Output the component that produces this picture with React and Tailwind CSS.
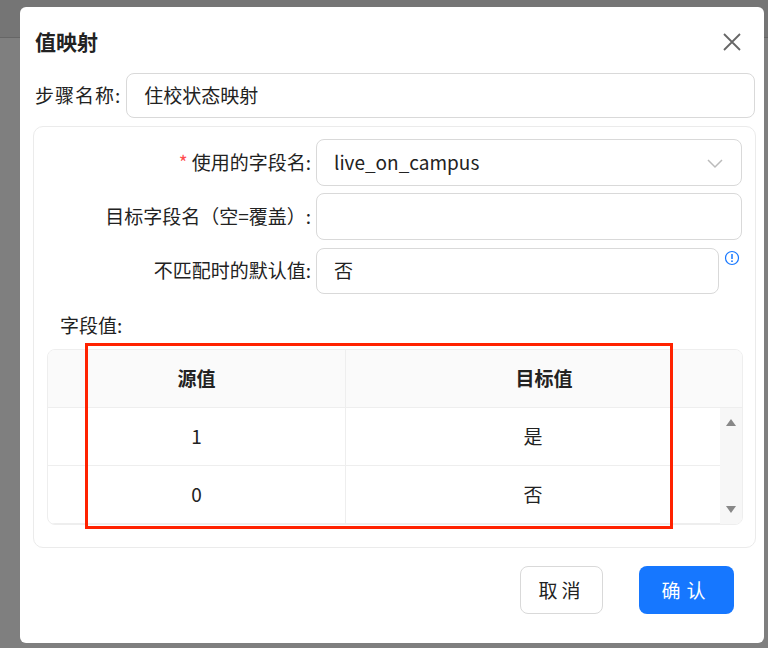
import React from 'react';

const F = { fontFamily: '"Noto Sans CJK SC", "Noto Sans", sans-serif' };

function Field({ label, required, children, extra }) {
  return (
    <div className="flex items-center h-[47px]">
      <div className="w-[282px] text-right pr-[5px] text-[19px] text-[#222] whitespace-nowrap">
        {required && <span className="text-[#ff4d4f] mr-1">*</span>}
        {label}
      </div>
      {children}
      {extra}
    </div>
  );
}

export default function App() {
  return (
    <div className="relative w-[768px] h-[648px] bg-[#7f7f7f] overflow-hidden" style={F}>
      <div className="h-[38px] bg-[#757575] border-b border-[#666]" />
      <div className="absolute left-[20px] top-[7px] w-[744px] h-[636px] bg-white rounded-[6px] flex flex-col">
        <div className="flex items-center justify-between pl-[15px] pr-[22px] h-[70px]">
          <span className="text-[21px] font-bold text-[#222]">值映射</span>
          <svg width="20" height="20" viewBox="0 0 20 20" stroke="#666" strokeWidth="1.8"><path d="M2 2L18 18M18 2L2 18" /></svg>
        </div>
        <div className="flex items-center pl-[15px] pr-[9px] -mt-[4px]">
          <span className="text-[19px] text-[#222] mr-[5px] tracking-[1px]">步骤名称:</span>
          <div className="flex-1 h-[45px] border border-[#d9d9d9] rounded-[8px] flex items-center px-[17px] text-[19px] text-[#222]">住校状态映射</div>
        </div>
        <div className="relative ml-[13px] mr-[8px] mt-[8px] h-[422px] border border-[#ebebeb] rounded-[10px] pt-[12px] pr-[13px]">
          <div className="flex flex-col gap-[7px]">
            <Field label="使用的字段名:" required>
              <div className="flex-1 h-[47px] border border-[#d9d9d9] rounded-[8px] flex items-center justify-between px-[17px] text-[19px] text-[#222]">
                live_on_campus
                <svg width="18" height="18" viewBox="0 0 18 18" fill="none" stroke="#bbb" strokeWidth="1.5"><path d="M2 6l7 7 7-7" /></svg>
              </div>
            </Field>
            <Field label="目标字段名（空=覆盖）:">
              <div className="flex-1 h-[47px] border border-[#d9d9d9] rounded-[8px]" />
            </Field>
            <Field label="不匹配时的默认值:" extra={
              <div className="w-[18px] self-start mt-[3px] ml-[5px]">
                <svg width="16" height="16" viewBox="0 0 16 16"><circle cx="8" cy="8" r="6.5" fill="none" stroke="#1677ff" strokeWidth="1.2" /><path d="M8 4v5" stroke="#1677ff" strokeWidth="1.5" /><circle cx="8" cy="11.2" r="0.9" fill="#1677ff" /></svg>
              </div>
            }>
              <div className="flex-1 h-[46px] border border-[#d9d9d9] rounded-[8px] flex items-center px-[17px] text-[19px] text-[#222]">否</div>
            </Field>
          </div>
          <div className="pl-[26px] mt-[17px] text-[19px] text-[#222]">字段值:</div>
          <div className="ml-[13px] mt-[9px] w-[696px] border border-[#eee] rounded-[8px] overflow-hidden">
            <div className="flex h-[58px] bg-[#fafafa] border-b border-[#eee] text-[19px] font-bold text-[#222]">
              <div className="w-[298px] flex items-center justify-center border-r border-[#eee]">源值</div>
              <div className="flex-1 flex items-center justify-center">目标值</div>
            </div>
            <div className="flex">
              <div className="flex-1">
                {[['1', '是'], ['0', '否']].map(([a, b]) => (
                  <div key={a} className="flex h-[58px] border-b border-[#eee] text-[19px] text-[#222]">
                    <div className="w-[298px] flex items-center justify-center border-r border-[#eee]">{a}</div>
                    <div className="flex-1 flex items-center justify-center">{b}</div>
                  </div>
                ))}
              </div>
              <div className="w-[22px] bg-[#f7f7f7] flex flex-col items-center justify-between py-[10px]">
                <svg width="12" height="9" viewBox="0 0 12 9"><path d="M6 1L11 8H1Z" fill="#888" /></svg>
                <svg width="12" height="9" viewBox="0 0 12 9"><path d="M1 1H11L6 8Z" fill="#888" /></svg>
              </div>
            </div>
          </div>
          <div className="absolute left-[51px] top-[216px] w-[588px] h-[186px] border-[3px] border-[#ff2200]" />
        </div>
        <div className="flex justify-end gap-[36px] pr-[30px] mt-[18px]">
          <button className="w-[83px] h-[48px] border border-[#d9d9d9] rounded-[8px] text-[19px] text-[#222] tracking-[4px]">取消</button>
          <button className="w-[95px] h-[48px] bg-[#1677ff] rounded-[8px] text-[19px] text-white tracking-[6px]">确认</button>
        </div>
      </div>
    </div>
  );
}
